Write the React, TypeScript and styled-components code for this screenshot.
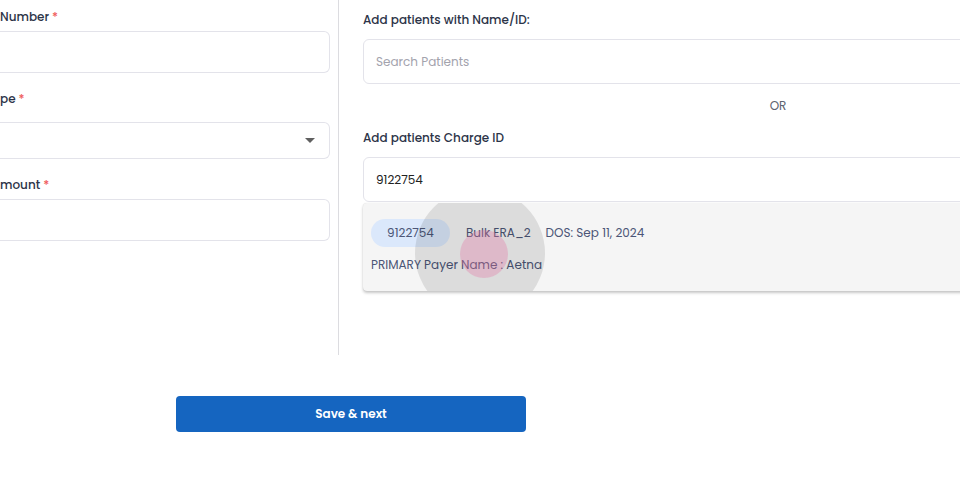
import React from "react";
import styled, { createGlobalStyle } from "styled-components";

const Global = createGlobalStyle`
  html, body { margin: 0; padding: 0; background: #fff; overflow: hidden; }
  body { font-family: "Poppins", "Inter", "Noto Sans", sans-serif; }
  * { box-sizing: border-box; }
`;

const Page = styled.div`
  width: 960px;
  height: 495px;
  overflow: hidden;
  display: flex;
  flex-direction: column;
`;

const Columns = styled.div`
  display: flex;
  height: 355px;
`;

const LeftCol = styled.div`
  width: 339px;
  flex: none;
  padding-right: 8px;
  border-right: 1px solid #dcdce0;
  display: flex;
  flex-direction: column;
`;

const RightCol = styled.div`
  width: 854px;
  flex: none;
  padding-left: 24px;
  display: flex;
  flex-direction: column;
`;

const Label = styled.div<{ $top: number }>`
  margin-top: ${(p) => p.$top}px;
  height: 18px;
  line-height: 18px;
  font-size: 12px;
  font-weight: 500;
  color: #2c3448;
  white-space: nowrap;
`;

const Star = styled.span`
  color: #ef5b5b;
  margin-left: 3px;
`;

const Field = styled.div<{ $h: number; $top: number }>`
  margin-top: ${(p) => p.$top}px;
  height: ${(p) => p.$h}px;
  border: 1px solid #e3e3ea;
  border-radius: 6px;
  background: #fff;
  display: flex;
  align-items: center;
  padding: 0 12px;
  font-size: 12px;
  color: #222;
  position: relative;
`;

const LeftField = styled(Field)`
  border-left: none;
  border-top-left-radius: 0;
  border-bottom-left-radius: 0;
  justify-content: flex-end;
  padding-right: 14px;
`;

const Placeholder = styled.span`
  color: #a3a3ad;
`;

const Caret = styled.span`
  width: 0;
  height: 0;
  border-left: 5px solid transparent;
  border-right: 5px solid transparent;
  border-top: 5px solid #606060;
`;

const Or = styled.div`
  margin-top: 14px;
  text-align: center;
  font-size: 12px;
  color: #5d6470;
  line-height: 16px;
  height: 16px;
`;

const Menu = styled.div`
  height: 88px;
  margin-top: 1px;
  background: #f5f5f5;
  border-radius: 4px;
  box-shadow: 0 2px 3px rgba(0, 0, 0, 0.22), 0 0 1px rgba(0, 0, 0, 0.15);
  padding: 16px 8px 0;
  position: relative;
  overflow: hidden;
`;

const Row = styled.div`
  display: flex;
  align-items: center;
  position: relative;
  z-index: 1;
  font-size: 12px;
  color: #4c5677;
`;

const Chip = styled.span`
  width: 79px;
  height: 28px;
  border-radius: 14px;
  background: #dbe8fb;
  display: inline-flex;
  align-items: center;
  justify-content: center;
  margin-right: 16px;
`;

const Gap = styled.span`
  margin-left: 15px;
`;

const SubRow = styled(Row)`
  margin-top: 9px;
  height: 18px;
`;

const Ripple = styled.span<{ $x: number; $y: number; $r: number; $c: string }>`
  position: absolute;
  left: ${(p) => p.$x - p.$r}px;
  top: ${(p) => p.$y - p.$r}px;
  width: ${(p) => p.$r * 2}px;
  height: ${(p) => p.$r * 2}px;
  border-radius: 50%;
  background: ${(p) => p.$c};
  z-index: 2;
`;

const Footer = styled.div`
  padding: 41px 0 0 176px;
`;

const Button = styled.button`
  width: 350px;
  height: 36px;
  border: none;
  border-radius: 4px;
  background: #1565c0;
  color: #fff;
  font-family: inherit;
  font-size: 12px;
  font-weight: 600;
  cursor: pointer;
`;

export default function App() {
  return (
    <Page>
      <Global />
      <Columns>
        <LeftCol>
          <Label $top={8}>
            Number<Star>*</Star>
          </Label>
          <LeftField $top={5} $h={42} />
          <Label $top={17}>
            pe<Star>*</Star>
          </Label>
          <LeftField $top={14} $h={37}>
            <Caret />
          </LeftField>
          <Label $top={17}>
            mount<Star>*</Star>
          </Label>
          <LeftField $top={5} $h={42} />
        </LeftCol>
        <RightCol>
          <Label $top={11}>Add patients with Name/ID:</Label>
          <Field $top={10} $h={45}>
            <Placeholder>Search Patients</Placeholder>
          </Field>
          <Or>OR</Or>
          <Label $top={15}>Add patients Charge ID</Label>
          <Field $top={10} $h={45}>
            9122754
          </Field>
          <Menu>
            <Row>
              <Chip>9122754</Chip>
              Bulk ERA_2
              <Gap>DOS: Sep 11, 2024</Gap>
            </Row>
            <SubRow>PRIMARY Payer Name : Aetna</SubRow>
            <Ripple $x={117} $y={50} $r={65} $c="rgba(0, 0, 0, 0.1)" />
            <Ripple $x={121} $y={51} $r={24} $c="rgba(225, 120, 165, 0.35)" />
          </Menu>
        </RightCol>
      </Columns>
      <Footer>
        <Button>Save &amp; next</Button>
      </Footer>
    </Page>
  );
}
